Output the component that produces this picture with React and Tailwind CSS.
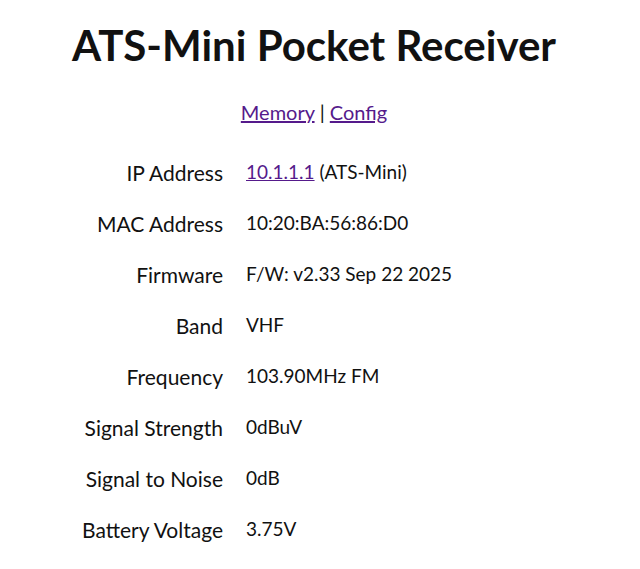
const rows = [
  ['IP Address', null],
  ['MAC Address', '10:20:BA:56:86:D0'],
  ['Firmware', 'F/W: v2.33 Sep 22 2025'],
  ['Band', 'VHF'],
  ['Frequency', '103.90MHz FM'],
  ['Signal Strength', '0dBuV'],
  ['Signal to Noise', '0dB'],
  ['Battery Voltage', '3.75V'],
];

export default function App() {
  return (
    <div className="min-h-[569px] bg-white text-[#111] font-['Lato',sans-serif]">
      <div className="w-[628px] pt-[20px]">
        <h1 className="text-center text-[42px] font-bold leading-[50px]">ATS-Mini Pocket Receiver</h1>
        <div className="mt-[30px] text-center text-[20px] leading-[24px]">
          <a href="#" className="text-[#551a8b] underline">Memory</a> | <a href="#" className="text-[#551a8b] underline">Config</a>
        </div>
        <div className="mt-[23px] flex flex-col">
          {rows.map(([label, value]) => (
            <div key={label} className="flex h-[51px] items-center">
              <div className="w-[224px] pr-[1px] text-right text-[21px]">{label}</div>
              <div className="pl-[22px] text-[19px]">
                {value ?? (
                  <>
                    <a href="#" className="text-[#551a8b] underline">10.1.1.1</a> (ATS-Mini)
                  </>
                )}
              </div>
            </div>
          ))}
        </div>
      </div>
    </div>
  );
}
